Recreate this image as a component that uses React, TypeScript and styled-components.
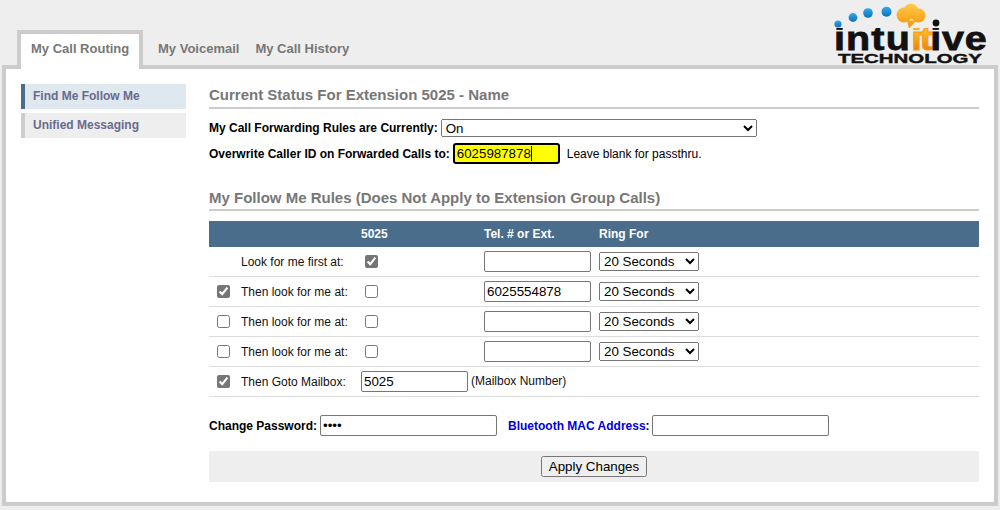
import React from "react";
import styled, { createGlobalStyle } from "styled-components";

const Global = createGlobalStyle`
  html, body { margin: 0; padding: 0; background: #eeeeee; }
  body { font-family: "Liberation Sans", Arial, sans-serif; font-size: 12px; color: #000; }
  #root { width: 1000px; height: 510px; overflow: hidden; }
  input, select, button { font-family: "Liberation Sans", Arial, sans-serif; }
`;

const Page = styled.div`
  width: 1000px;
  height: 510px;
  padding: 0 2px;
  box-sizing: border-box;
`;
const Header = styled.header`
  height: 69px;
  display: flex;
  justify-content: space-between;
  align-items: flex-end;
  padding: 0 14px 0 15px;
  position: relative;
`;
const Tabs = styled.nav`
  display: flex;
  align-items: flex-end;
`;
const Tab = styled.a<{ $active?: boolean }>`
  box-sizing: border-box;
  height: ${(p) => (p.$active ? "39px" : "35px")};
  width: ${(p) => (p.$active ? "126px" : "auto")};
  padding: 0 0 7px ${(p) => (p.$active ? "10px" : "0")};
  margin-right: ${(p) => (p.$active ? "15px" : "16px")};
  display: flex;
  align-items: center;
  font-size: 13px;
  font-weight: bold;
  color: #777777;
  background: ${(p) => (p.$active ? "#ffffff" : "transparent")};
  border: ${(p) => (p.$active ? "4px solid #cccccc" : "none")};
  border-bottom: none;
`;
const LogoArt = styled.svg`
  position: absolute;
  right: 10px;
  top: 0;
  display: block;
`;
const Panel = styled.main`
  box-sizing: border-box;
  position: relative;
  height: 441px;
  margin-top: -4px;
  background: #fff;
  border: 4px solid #cccccc;
  padding: 15px 15px 0 15px;
  display: flex;
  gap: 23px;
`;
const TabGap = styled.div`
  position: absolute;
  left: 15px;
  top: -4px;
  width: 118px;
  height: 4px;
  background: #fff;
`;
const Side = styled.aside`
  width: 165px;
  flex: none;
  display: flex;
  flex-direction: column;
  gap: 4px;
`;
const SideItem = styled.a<{ $active?: boolean }>`
  box-sizing: border-box;
  height: 25px;
  display: flex;
  align-items: center;
  padding: 0 0 2px 8px;
  font-size: 12px;
  font-weight: bold;
  color: #6a6a8c;
  background: ${(p) => (p.$active ? "#dfe7ef" : "#eeeeee")};
  border-left: 4px solid ${(p) => (p.$active ? "#4a6d8c" : "#cccccc")};
`;
const Content = styled.section`
  width: 770px;
  flex: none;
`;
const Heading = styled.h2<{ $gap?: number; $h?: number }>`
  margin: ${(p) => p.$gap ?? 0}px 0 0;
  height: ${(p) => p.$h ?? 25}px;
  box-sizing: border-box;
  font-size: 15px;
  line-height: 21px;
  font-weight: bold;
  color: #777777;
  border-bottom: 2px solid #cccccc;
`;
const FormRow = styled.div<{ $gap: number }>`
  display: flex;
  align-items: center;
  margin-top: ${(p) => p.$gap}px;
  font-weight: bold;
  font-size: 12px;
`;
const StatusSelect = styled.select`
  width: 316px;
  height: 18px;
  margin-left: 3px;
  font-size: 13.33px;
  padding: 0;
`;
const CallerWrap = styled.span`
  position: relative;
  display: block;
  margin-left: 3px;
  height: 21px;
`;
const CallerInput = styled.input`
  box-sizing: border-box;
  display: block;
  width: 107px;
  height: 21px;
  padding: 0 2px;
  font-size: 13.33px;
  background: #ffff00;
  border: 2px solid #000;
  border-radius: 3px;
  outline: none;
  caret-color: transparent;
`;
const Caret = styled.i`
  position: absolute;
  left: 78px;
  top: 3px;
  width: 1px;
  height: 15px;
  background: #000;
`;
const Hint = styled.span`
  margin-left: 7px;
  font-weight: normal;
  font-size: 12px;
`;
const RulesTable = styled.table`
  width: 770px;
  border-collapse: collapse;
  table-layout: fixed;
  margin-top: 10px;
`;
const HeadCell = styled.th`
  height: 26px;
  padding: 0;
  text-align: left;
  background: #4a6d8c;
  color: #ffffff;
  font-size: 12px;
  font-weight: bold;
`;
const Row = styled.tr`
  height: 30px;
  border-bottom: 1px solid #dddddd;
  &:first-child {
    height: 29px;
  }
`;
const Cell = styled.td`
  padding: 0;
  font-size: 12px;
  color: #111;
  white-space: nowrap;
`;
const LabelCell = styled(Cell)`
  padding-top: 2px;
`;
const Check = styled.input.attrs({ type: "checkbox" })<{ $inset?: number }>`
  display: block;
  width: 13px;
  height: 13px;
  margin: 0 0 0 ${(p) => p.$inset ?? 8}px;
  accent-color: #767676;
`;
const TextBox = styled.input<{ $w?: number }>`
  box-sizing: border-box;
  display: inline-block;
  vertical-align: middle;
  width: ${(p) => p.$w ?? 107}px;
  height: 21px;
  padding: 1px 2px;
  margin: 0;
  font-size: 13.33px;
  border: 1px solid #767676;
  border-radius: 2px;
  background: #fff;
`;
const RingSelect = styled.select`
  display: block;
  width: 100px;
  height: 19px;
  font-size: 13.33px;
  padding: 0;
`;
const NoteText = styled.span`
  margin-left: 3px;
  vertical-align: -1px;
`;
const AccountRow = styled.div`
  display: flex;
  align-items: center;
  margin-top: 18px;
  font-size: 12px;
  font-weight: bold;
`;
const AccountLabel = styled.span<{ $gap?: number; $end?: number }>`
  margin: 2px ${(p) => p.$end ?? 3}px 0 ${(p) => p.$gap ?? 0}px;
`;
const Blue = styled.span`
  color: #0000dd;
`;
const ActionBar = styled.div`
  margin-top: 15px;
  height: 31px;
  background: #eeeeee;
  display: flex;
  align-items: center;
  justify-content: center;
`;
const Apply = styled.button`
  box-sizing: border-box;
  width: 106px;
  height: 21px;
  padding: 0;
  font-size: 13.33px;
`;

const secs = ["10 Seconds", "20 Seconds", "30 Seconds"];
const Ring = () => (
  <RingSelect defaultValue="20 Seconds">
    {secs.map((s) => (
      <option key={s}>{s}</option>
    ))}
  </RingSelect>
);

const rows = [
  { lead: null, label: "Look for me first at:", c: true, v: "" },
  { lead: true, label: "Then look for me at:", c: false, v: "6025554878" },
  { lead: false, label: "Then look for me at:", c: false, v: "" },
  { lead: false, label: "Then look for me at:", c: false, v: "" },
];

const Logo = () => (
  <LogoArt width="156" height="66" viewBox="0 0 156 66">
    <defs>
      <linearGradient id="dot" x1="0" y1="0" x2="0" y2="1">
        <stop offset="0" stopColor="#35a9e8" />
        <stop offset="1" stopColor="#0b70c0" />
      </linearGradient>
      <linearGradient id="cloud" gradientUnits="userSpaceOnUse" x1="0" y1="4" x2="0" y2="26">
        <stop offset="0" stopColor="#ffc94a" />
        <stop offset="1" stopColor="#f79a0c" />
      </linearGradient>
      <linearGradient id="it" x1="0" y1="0" x2="0" y2="1">
        <stop offset="0.35" stopColor="#fbb81f" />
        <stop offset="0.85" stopColor="#ee7a12" />
      </linearGradient>
    </defs>
    <text transform="translate(2 50) scale(1.16 1)" fontFamily="Liberation Sans" fontWeight="bold" fontSize="34" fill="#111" stroke="#111" strokeWidth="0.8">
      <tspan letterSpacing="1">intu</tspan>
      <tspan letterSpacing="-2" fill="url(#it)" stroke="#f39a18">it</tspan>
      <tspan letterSpacing="0.6">ive</tspan>
    </text>
    <text x="6" y="63" fontFamily="Liberation Sans" fontWeight="bold" fontSize="13" textLength="144" lengthAdjust="spacingAndGlyphs" fill="#111" stroke="#111" strokeWidth="0.4">
      TECHNOLOGY
    </text>
    <rect x="0" y="18" width="152" height="10" fill="#eeeeee" />
    <circle cx="6" cy="24" r="3.6" fill="url(#dot)" />
    <circle cx="21" cy="17.5" r="4.4" fill="url(#dot)" />
    <circle cx="36" cy="13" r="4.8" fill="url(#dot)" />
    <circle cx="54.5" cy="11.7" r="5" fill="url(#dot)" />
    <g fill="url(#cloud)">
      <circle cx="72" cy="15" r="7.5" />
      <circle cx="79" cy="11.5" r="7.8" />
      <circle cx="86.500" cy="15.500" r="7" />
      <polygon points="75,20 84,21 77,28.500" />
    </g>
    <circle cx="104" cy="23" r="3.4" fill="#111" />
  </LogoArt>
);

export default function App() {
  return (
    <Page>
      <Global />
      <Header>
        <Tabs>
          <Tab $active>My Call Routing</Tab>
          <Tab>My Voicemail</Tab>
          <Tab>My Call History</Tab>
        </Tabs>
        <Logo />
      </Header>
      <Panel>
        <TabGap />
        <Side>
          <SideItem $active>Find Me Follow Me</SideItem>
          <SideItem>Unified Messaging</SideItem>
        </Side>
        <Content>
          <Heading>Current Status For Extension 5025 - Name</Heading>
          <FormRow $gap={10}>
            My Call Forwarding Rules are Currently:
            <StatusSelect defaultValue="On">
              <option>On</option>
              <option>Off</option>
            </StatusSelect>
          </FormRow>
          <FormRow $gap={6}>
            Overwrite Caller ID on Forwarded Calls to:
            <CallerWrap>
              <CallerInput defaultValue="6025987878" />
              <Caret />
            </CallerWrap>
            <Hint>Leave blank for passthru.</Hint>
          </FormRow>
          <Heading $gap={23} $h={24}>My Follow Me Rules (Does Not Apply to Extension Group Calls)</Heading>
          <RulesTable>
            <colgroup>
              <col style={{ width: 32 }} />
              <col style={{ width: 120 }} />
              <col style={{ width: 123 }} />
              <col style={{ width: 115 }} />
              <col />
            </colgroup>
            <thead>
              <tr>
                <HeadCell />
                <HeadCell />
                <HeadCell>5025</HeadCell>
                <HeadCell>Tel. # or Ext.</HeadCell>
                <HeadCell>Ring For</HeadCell>
              </tr>
            </thead>
            <tbody>
              {rows.map((r, i) => (
                <Row key={i}>
                  <Cell>{r.lead !== null && <Check defaultChecked={r.lead} />}</Cell>
                  <LabelCell>{r.label}</LabelCell>
                  <Cell>
                    <Check defaultChecked={r.c} $inset={4} />
                  </Cell>
                  <Cell>
                    <TextBox defaultValue={r.v} />
                  </Cell>
                  <Cell>
                    <Ring />
                  </Cell>
                </Row>
              ))}
              <Row>
                <Cell>
                  <Check defaultChecked />
                </Cell>
                <LabelCell>Then Goto Mailbox:</LabelCell>
                <Cell colSpan={3}>
                  <TextBox defaultValue="5025" />
                  <NoteText>(Mailbox Number)</NoteText>
                </Cell>
              </Row>
            </tbody>
          </RulesTable>
          <AccountRow>
            <AccountLabel>Change Password:</AccountLabel>
            <TextBox type="password" defaultValue="1234" $w={177} />
            <AccountLabel $gap={11} $end={2}>
              <Blue>Bluetooth MAC Address</Blue>:
            </AccountLabel>
            <TextBox $w={177} />
          </AccountRow>
          <ActionBar>
            <Apply>Apply Changes</Apply>
          </ActionBar>
        </Content>
      </Panel>
    </Page>
  );
}
